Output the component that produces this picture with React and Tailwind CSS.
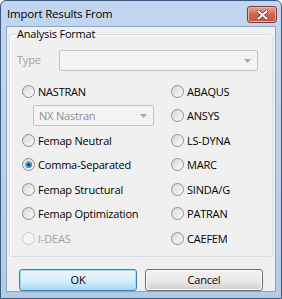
import { useState } from 'react';

const LEFT = ['NASTRAN', null, 'Femap Neutral', 'Comma-Separated', 'Femap Structural', 'Femap Optimization', 'I-DEAS'];
const RIGHT = ['ABAQUS', 'ANSYS', 'LS-DYNA', 'MARC', 'SINDA/G', 'PATRAN', 'CAEFEM'];

export default function App() {
  const [format, setFormat] = useState('Comma-Separated');

  return (
    <div
      className="relative flex h-[299px] w-[282px] flex-col overflow-hidden rounded-t-[6px] border border-[#3d5a80] bg-gradient-to-b from-[#c2d7ef] to-[#b4cbe6] text-[11px] tracking-[-0.2px] text-black"
      style={{ fontFamily: '"Open Sans", "Noto Sans", sans-serif' }}
    >
      {/* Title bar */}
      <div className="flex h-[25px] shrink-0 items-center justify-between pl-[6px] pr-[4px]">
        <span className="text-[11.5px] leading-none text-black">Import Results From</span>
        <CloseButton />
      </div>

      {/* Client area */}
      <div className="mx-[5px] flex h-[266px] flex-col border border-[#8ba6c4] bg-[#f0f0f0] px-[1px]">
        <fieldset className="mx-[1px] h-[230px] rounded-[3px] border border-[#d5dfe5] px-[6px] shadow-[inset_1px_1px_0_#fff]">
          <legend className="mt-[1px] px-[1px] leading-[14px]">Analysis Format</legend>

          <div className="mt-[9px] flex items-center">
            <span className="w-[43px] pl-[1px] text-[#a0a0a0]">Type</span>
            <Combo className="w-[199px]" value="" />
          </div>

          <div className="mt-[8px] grid grid-cols-[150px_1fr] grid-rows-[repeat(7,24.5px)]">
            {LEFT.map((name, i) => (
              <div key={`l${i}`} className="flex items-center pl-[6px]" style={{ gridColumn: 1, gridRow: i + 1 }}>
                {name === null ? (
                  <Combo className="ml-[11px] w-[121px]" value="NX Nastran" />
                ) : (
                  <Radio
                    label={name}
                    checked={format === name}
                    disabled={name === 'I-DEAS'}
                    onChange={() => setFormat(name)}
                  />
                )}
              </div>
            ))}
            {RIGHT.map((name, i) => (
              <div key={`r${i}`} className="flex items-center pl-[5px]" style={{ gridColumn: 2, gridRow: i + 1 }}>
                <Radio label={name} checked={format === name} onChange={() => setFormat(name)} />
              </div>
            ))}
          </div>
        </fieldset>

        <div className="mt-[12px] flex pl-[11px]">
          <button className="h-[22px] w-[118px] rounded-[3px] border border-[#3c7fb1] bg-gradient-to-b from-[#eaf6fd] via-[#d9f0fc] to-[#a7d9f5] shadow-[inset_0_0_0_1px_#a8dcf4]">
            OK
          </button>
          <button className="ml-[8px] h-[22px] w-[118px] rounded-[3px] border border-[#707070] bg-gradient-to-b from-[#f2f2f2] via-[#ebebeb] to-[#cfcfcf] shadow-[inset_0_0_0_1px_#fcfcfc]">
            Cancel
          </button>
        </div>
      </div>
    </div>
  );
}

function CloseButton() {
  return (
    <div className="mt-[2px] flex h-[17px] w-[30px] items-center justify-center rounded-[3px] border border-[#7a3b3b] bg-gradient-to-b from-[#e7a59c] via-[#d2644f] to-[#c4523d] shadow-[inset_0_0_0_1px_#eab4ab]">
      <svg width="11" height="10" viewBox="0 0 11 10">
        <path d="M1 1 L10 9 M10 1 L1 9" stroke="#5a2a22" strokeWidth="3.2" strokeLinecap="square" />
        <path d="M1.5 1.5 L9.5 8.5 M9.5 1.5 L1.5 8.5" stroke="#fff" strokeWidth="2" strokeLinecap="square" />
      </svg>
    </div>
  );
}

function Combo({ className, value }) {
  return (
    <div className={`flex h-[21px] items-center justify-between rounded-[2px] border border-[#c3c3c3] bg-[#f4f4f4] pl-[5px] pr-[6px] text-[#8e8e8e] ${className}`}>
      <span>{value}</span>
      <svg width="7" height="4" viewBox="0 0 7 4">
        <path d="M0 0 H7 L3.5 4 Z" fill="#a8a8a8" />
      </svg>
    </div>
  );
}

function Radio({ label, checked, disabled, onChange }) {
  return (
    <label className={`flex items-center ${disabled ? 'text-[#a0a0a0]' : 'text-black'}`} onClick={disabled ? undefined : onChange}>
      <span
        className={`flex h-[13px] w-[13px] items-center justify-center rounded-full border ${
          disabled ? 'border-[#c8c8c8] bg-[#f4f4f4]' : 'border-[#8e8f8f] bg-gradient-to-br from-[#d8d8d8] to-[#fbfbfb]'
        }`}
      >
        {checked && (
          <span className="flex h-[7px] w-[7px] items-center justify-center rounded-full bg-gradient-to-br from-[#8ad0f5] to-[#1f6bb0]">
            <span className="h-[3px] w-[3px] rounded-full bg-[#123a63]" />
          </span>
        )}
      </span>
      <span className="ml-[3px] leading-none">{label}</span>
    </label>
  );
}
